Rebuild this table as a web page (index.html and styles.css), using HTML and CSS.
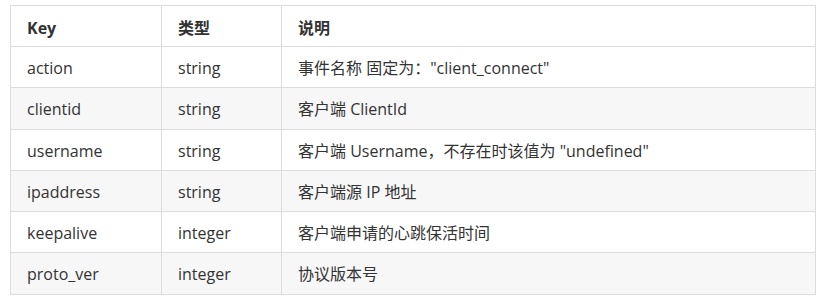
FILE: index.html
```html
<!DOCTYPE html>
<html>
<head>
<meta charset="utf-8">
<link rel="stylesheet" href="styles.css">
</head>
<body>
<table class="tbl">
  <colgroup><col class="c1"><col class="c2"><col class="c3"></colgroup>
  <thead>
    <tr><th>Key</th><th>类型</th><th>说明</th></tr>
  </thead>
  <tbody>
    <tr><td>action</td><td>string</td><td>事件名称 固定为："client_connect"</td></tr>
    <tr><td>clientid</td><td>string</td><td>客户端 ClientId</td></tr>
    <tr><td>username</td><td>string</td><td>客户端 Username，不存在时该值为 "undefined"</td></tr>
    <tr><td>ipaddress</td><td>string</td><td>客户端源 IP 地址</td></tr>
    <tr><td>keepalive</td><td>integer</td><td>客户端申请的心跳保活时间</td></tr>
    <tr><td>proto_ver</td><td>integer</td><td>协议版本号</td></tr>
  </tbody>
</table>
</body>
</html>
```

FILE: styles.css
```css
html, body {
  margin: 0;
  padding: 0;
  background: #fff;
}
body {
  padding: 5px 0 0 10px;
  font-family: "Open Sans", "Noto Sans CJK SC", sans-serif;
  font-size: 16px;
  color: #333;
}
.tbl {
  border-collapse: collapse;
  width: 806px;
  table-layout: fixed;
  box-shadow: 0 1px 0 #e4e4e4;
}
.c1 { width: 151px; }
.c2 { width: 120px; }
.tbl th, .tbl td {
  border: 1px solid #dcdcdc;
  padding: 9px 16px 7px;
  line-height: 24.3px;
  text-align: left;
  white-space: nowrap;
}
.tbl th {
  font-weight: 700;
  line-height: 24px;
  padding-top: 10px;
  padding-bottom: 6px;
}
.tbl tbody tr:nth-child(even) td {
  background: #f7f7f7;
}
```
